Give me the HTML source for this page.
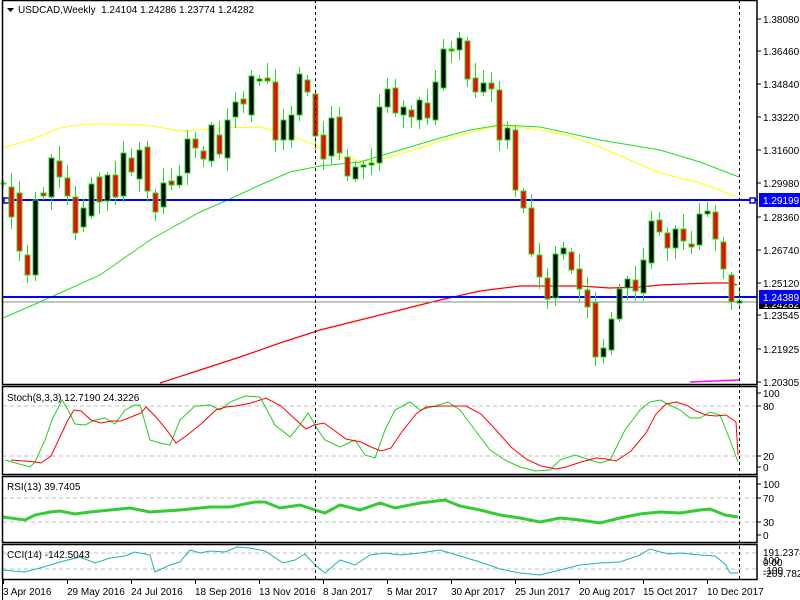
<!DOCTYPE html>
<html><head><meta charset="utf-8">
<style>
html,body{margin:0;padding:0;background:#fff;}
svg{display:block;font-family:"Liberation Sans",sans-serif;font-size:10px;}
</style></head>
<body>
<svg id="s" width="800" height="600" xmlns="http://www.w3.org/2000/svg">
<rect width="800" height="600" fill="#fff"/>
</svg>
<script>
var s=document.getElementById('s');var h='';
function L(x1,y1,x2,y2,c,w,d){h+='<line x1="'+x1+'" y1="'+y1+'" x2="'+x2+'" y2="'+y2+'" stroke="'+c+'" stroke-width="'+(w||1)+'"'+(d?' stroke-dasharray="'+d+'"':'')+'/>';}
function P(pts,c,w){h+='<polyline fill="none" stroke="'+c+'" stroke-width="'+(w||1)+'" points="'+pts.map(function(p){return p[0]+','+p[1]}).join(' ')+'"/>';}
function T(x,y,t,c,a){h+='<text x="'+x+'" y="'+y+'" fill="'+(c||'#000')+'"'+(a?' text-anchor="'+a+'"':'')+'>'+t+'</text>';}
var R=757;
[406,456,498,522,553,569].forEach(function(v){L(3,v,R,v,'#c0c0c0',1,'4,3')});
P([[3,148],[30,140],[60,128],[88,124],[110,124],[145,125],[170,129],[185,131],[220,128],[260,127],[290,135],[315,145],[330,155],[360,161],[380,160],[420,148],[460,135],[500,125],[540,130],[570,136],[600,147],[630,160],[660,173],[700,183],[735,196]],'#ffff00',1);
P([[3,318],[40,302],[100,275],[150,240],[200,212],[230,199],[260,185],[290,172],[320,166],[360,162],[400,150],[440,138],[470,130],[500,125],[540,127],[600,140],[660,150],[700,162],[739,177]],'#22dd22',1);
P([[160,383],[200,370],[240,357],[280,343],[320,330],[360,320],[400,310],[440,300],[480,291],[520,286],[580,286],[610,288],[640,287],[660,285],[710,283],[730,283],[737,285]],'#ff0000',1.2);
P([[690,382],[739,380]],'#ff00ff',1.5);
L(3,200,R,200,'#0000ff',2);L(3,297,R,297,'#0000ff',2);L(3,302,R,302,'#808890',1);
h+='<rect x="4" y="198" width="5" height="5" fill="#fff" stroke="#0000ff" stroke-width="1.5"/>';
h+='<rect x="750" y="198" width="5" height="5" fill="#fff" stroke="#0000ff" stroke-width="1.5"/>';
var C=[[183,184],[187,217],[193,251],[255,275],[275,200],[193,196],[197,158],[161,177],[178,196],[197,233],[227,208],[216,184],[177,202],[201,175],[175,197],[196,153],[158,172],[179,150],[147,191],[193,212],[207,183],[181,185],[185,176],[173,139],[139,148],[151,159],[161,125],[135,154],[158,120],[117,102],[99,104],[115,76],[81,79],[78,81],[82,140],[140,120],[140,115],[115,74],[80,92],[94,136],[135,159],[156,118],[117,153],[157,176],[179,167],[167,165],[165,163],[163,107],[107,89],[88,113],[115,107],[110,117],[120,100],[103,118],[120,82],[88,49],[49,51],[50,38],[41,79],[78,92],[92,83],[83,89],[90,140],[140,128],[130,190],[191,208],[208,254],[255,277],[278,299],[298,254],[254,248],[252,270],[269,289],[290,307],[303,357],[357,348],[350,319],[319,289],[288,279],[280,291],[293,260],[263,221],[220,232],[233,248],[248,229],[229,241],[244,247],[245,214],[214,211],[212,239],[242,269],[275,302],[303,301]];
C.forEach(function(c,k){var x=3+8*k,o=c[0],cl=c[1],t=Math.min(o,cl),b=Math.max(o,cl);
var r1=(k*37%13)+3,r2=(k*53%11)+3;L(x+0.5,t-r1,x+0.5,b+r2,'#22e022',1);
var bull=cl<o;h+='<rect x="'+(x-2)+'" y="'+t+'" width="5" height="'+Math.max(b-t,1)+'" fill="'+(bull?'#000':'#ff0000')+'" stroke="#22e022" stroke-width="1"/>';});
var G=[[5,460],[30,467],[35,462],[45,440],[52,420],[62,400],[68,410],[75,424],[85,425],[95,420],[105,418],[115,424],[125,410],[135,405],[140,405],[150,440],[160,443],[170,445],[180,420],[195,406],[210,405],[220,410],[230,402],[245,396],[260,397],[275,425],[290,437],[300,425],[308,413],[318,430],[325,440],[340,447],[355,440],[365,455],[375,458],[385,430],[395,410],[410,402],[420,410],[435,406],[448,402],[460,410],[475,430],[490,450],[505,460],[520,467],[535,471],[550,470],[560,460],[575,455],[590,460],[600,463],[610,460],[625,430],[640,410],[650,402],[660,400],[670,405],[680,410],[690,418],[700,418],[710,412],[720,415],[730,440],[738,462]];
var Rd=G.map(function(p,i){var a=G[Math.max(0,i-1)],b=G[Math.max(0,i-2)];return [Math.min(p[0]+6,738),Math.round((p[1]+a[1]+b[1])/3)]});
Rd[Rd.length-1]=[738,455];
P(G,'#22cc22',1);P(Rd,'#ff0000',1);
P([[3,517],[25,520],[35,515],[50,512],[60,511],[75,514],[90,512],[110,510],[130,508],[150,512],[180,510],[210,507],[230,507],[255,502],[265,502],[280,508],[300,505],[315,510],[325,513],[340,505],[360,510],[380,503],[395,508],[420,503],[445,500],[460,506],[480,510],[500,515],[520,518],[540,522],[560,518],[580,520],[600,523],[620,518],[640,514],[660,512],[680,513],[700,510],[710,509],[725,515],[738,517]],'#33cc33',3);
P([[3,570],[25,572],[40,568],[60,562],[80,557],[95,563],[110,558],[125,556],[135,552],[150,555],[155,572],[170,565],[180,562],[190,550],[200,553],[210,551],[225,552],[237,547],[250,548],[265,551],[283,563],[295,560],[305,554],[315,565],[325,573],[340,560],[355,565],[370,555],[385,553],[400,555],[420,553],[440,550],[460,556],[480,562],[500,569],[520,573],[540,575],[560,570],[580,565],[600,563],[620,562],[640,555],[650,549],[660,552],[670,554],[680,553],[700,555],[715,556],[725,564],[730,573],[738,573]],'#20b0b0',1);
L(315.5,0,315.5,580,'#000',1,'3,3');L(739.5,0,739.5,580,'#000',1,'3,3');
[[0,384],[386,474],[476,542],[544,579]].forEach(function(b){h+='<rect x="2.5" y="'+(b[0]+0.5)+'" width="'+(R-2.5)+'" height="'+(b[1]-b[0])+'" fill="none" stroke="#000" stroke-width="1.5"/>';});
L(2.5,579,2.5,600,'#000',1);
var pl=[['1.38080',19],['1.36460',51],['1.34840',84],['1.33220',117],['1.31600',150],['1.29980',183],['1.28360',217],['1.26740',250],['1.25120',283],['1.23545',315],['1.21925',349],['1.20305',382]];
pl.forEach(function(p){L(R,p[1],R+4,p[1],'#000');T(763,p[1]+4,p[0]);});
h+='<rect x="759" y="300" width="41" height="9" fill="#000"/>';T(763,308,'1.24282','#fff');
h+='<rect x="759" y="193" width="41" height="14" fill="#0000ff"/>';T(763,204,'1.29199','#fff');
h+='<rect x="759" y="290" width="41" height="14" fill="#0000ff"/>';T(763,301,'1.24389','#fff');
[['100',393],['80',406],['20',456],['0',467]].forEach(function(p){L(R,p[1],R+4,p[1],'#000');T(763,p[1]+4,p[0]);});
[['100',484],['70',498],['30',522],['0',535]].forEach(function(p){L(R,p[1],R+4,p[1],'#000');T(763,p[1]+4,p[0]);});
T(763,556,'191.2378');T(763,564,'100');T(763,566,'0.00');T(763,574,'-100');T(763,577,'-209.7829');
h+='<polygon points="7,8 14,8 10.5,12" fill="#000"/>';
T(18,13,'USDCAD,Weekly&#160; 1.24104 1.24286 1.23774 1.24282');
T(7,401,'Stoch(8,3,3) 12.7190 24.3226');T(7,490,'RSI(13) 39.7405');T(7,558,'CCI(14) -142.5043');
var d=[['3 Apr 2016',3],['29 May 2016',67],['24 Jul 2016',131],['18 Sep 2016',195],['13 Nov 2016',259],['8 Jan 2017',323],['5 Mar 2017',387],['30 Apr 2017',451],['25 Jun 2017',515],['20 Aug 2017',579],['15 Oct 2017',643],['10 Dec 2017',707]];
d.forEach(function(p){L(p[1]+0.5,579,p[1]+0.5,584,'#000');T(p[1],595,p[0]);});
s.innerHTML+=h;
</script>
</body></html>
